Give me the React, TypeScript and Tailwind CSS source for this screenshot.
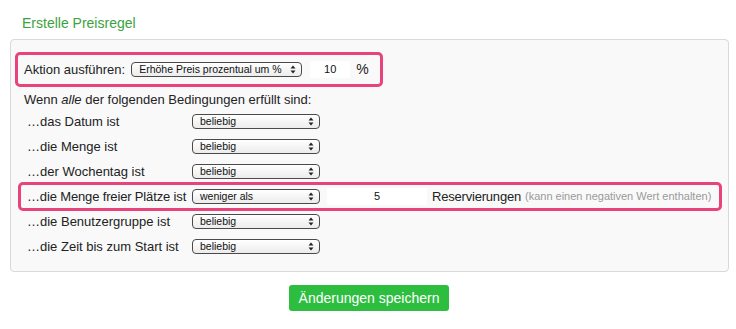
import React from 'react';

const font = { fontFamily: '"Liberation Sans", Arial, sans-serif' };

function Arrows() {
  return (
    <svg width="6" height="9" viewBox="0 0 6 9" className="shrink-0">
      <path d="M3 0.5 L5.5 3.5 H0.5 Z" fill="#222" />
      <path d="M3 8.5 L5.5 5.5 H0.5 Z" fill="#222" />
    </svg>
  );
}

function FakeSelect({ value, width }: { value: string; width: string }) {
  return (
    <div
      className={`${width} h-[15px] shrink-0 flex items-center justify-between pl-[7px] pr-[5px] border border-[#4a4a4a] rounded-[4px] bg-gradient-to-b from-white to-[#ececec] text-[10.5px] text-[#111] leading-none whitespace-nowrap`}
    >
      <span>{value}</span>
      <Arrows />
    </div>
  );
}

const rows = [
  { label: '…das Datum ist' },
  { label: '…die Menge ist' },
  { label: '…der Wochentag ist' },
  { label: '…die Menge freier Plätze ist', special: true },
  { label: '…die Benutzergruppe ist' },
  { label: '…die Zeit bis zum Start ist' },
];

export default function App() {
  return (
    <div className="w-[736px] h-[329px] bg-white px-[10px] text-[#222]" style={font}>
      <div className="pt-[14px] pl-[12px] text-[14px] leading-[18px] text-[#3aa23e]">Erstelle Preisregel</div>

      <div className="mt-[7px] w-[719px] h-[233px] border border-[#d9d9d9] rounded-[4px] bg-[#f9f9f9] px-[4px] pt-[12px]">
        {/* action */}
        <div className="inline-flex items-center h-[35px] border-[3px] border-[#e8437a] rounded-[5px] pl-[6px] pr-[11px] text-[13px]">
          <span className="mr-[6px]">Aktion ausführen:</span>
          <FakeSelect value="Erhöhe Preis prozentual um %" width="w-[171px]" />
          <div className="ml-[8px] w-[40px] h-[17px] bg-white flex items-center justify-center text-[11px] text-[#111]">10</div>
          <span className="ml-[6px] text-[14px]">%</span>
        </div>

        <div className="mt-[4px] pl-[9px] text-[13px] leading-[18px]">
          Wenn <i>alle</i> der folgenden Bedingungen erfüllt sind:
        </div>

        <div className="ml-[3px] flex flex-col items-start">
          {rows.map((r) =>
            r.special ? (
              <div
                key={r.label}
                className="flex items-center h-[29px] -my-[2px] border-[3px] border-[#e8437a] rounded-[5px] pl-[6px] pr-[8px] text-[13px] whitespace-nowrap"
              >
                <span className="w-[165px] shrink-0 tracking-[-0.15px]">{r.label}</span>
                <FakeSelect value="weniger als" width="w-[128px]" />
                <div className="ml-[7px] w-[100px] h-[17px] bg-white flex items-center justify-center text-[11px] text-[#111]">5</div>
                <span className="ml-[5px] tracking-[-0.2px]">Reservierungen</span>
                <span className="ml-[4px] text-[11px] text-[#9a9a9a]">(kann einen negativen Wert enthalten)</span>
              </div>
            ) : (
              <div key={r.label} className="flex items-center h-[25px] pl-[9px] text-[13px] whitespace-nowrap">
                <span className="w-[165px] shrink-0">{r.label}</span>
                <FakeSelect value="beliebig" width="w-[128px]" />
              </div>
            )
          )}
        </div>
      </div>

      <div className="mt-[13px] flex justify-center">
        <button className="w-[160px] h-[26px] rounded-[3px] bg-[#2dbe40] text-white text-[14px] ml-[2px]" style={font}>
          Änderungen speichern
        </button>
      </div>
    </div>
  );
}
